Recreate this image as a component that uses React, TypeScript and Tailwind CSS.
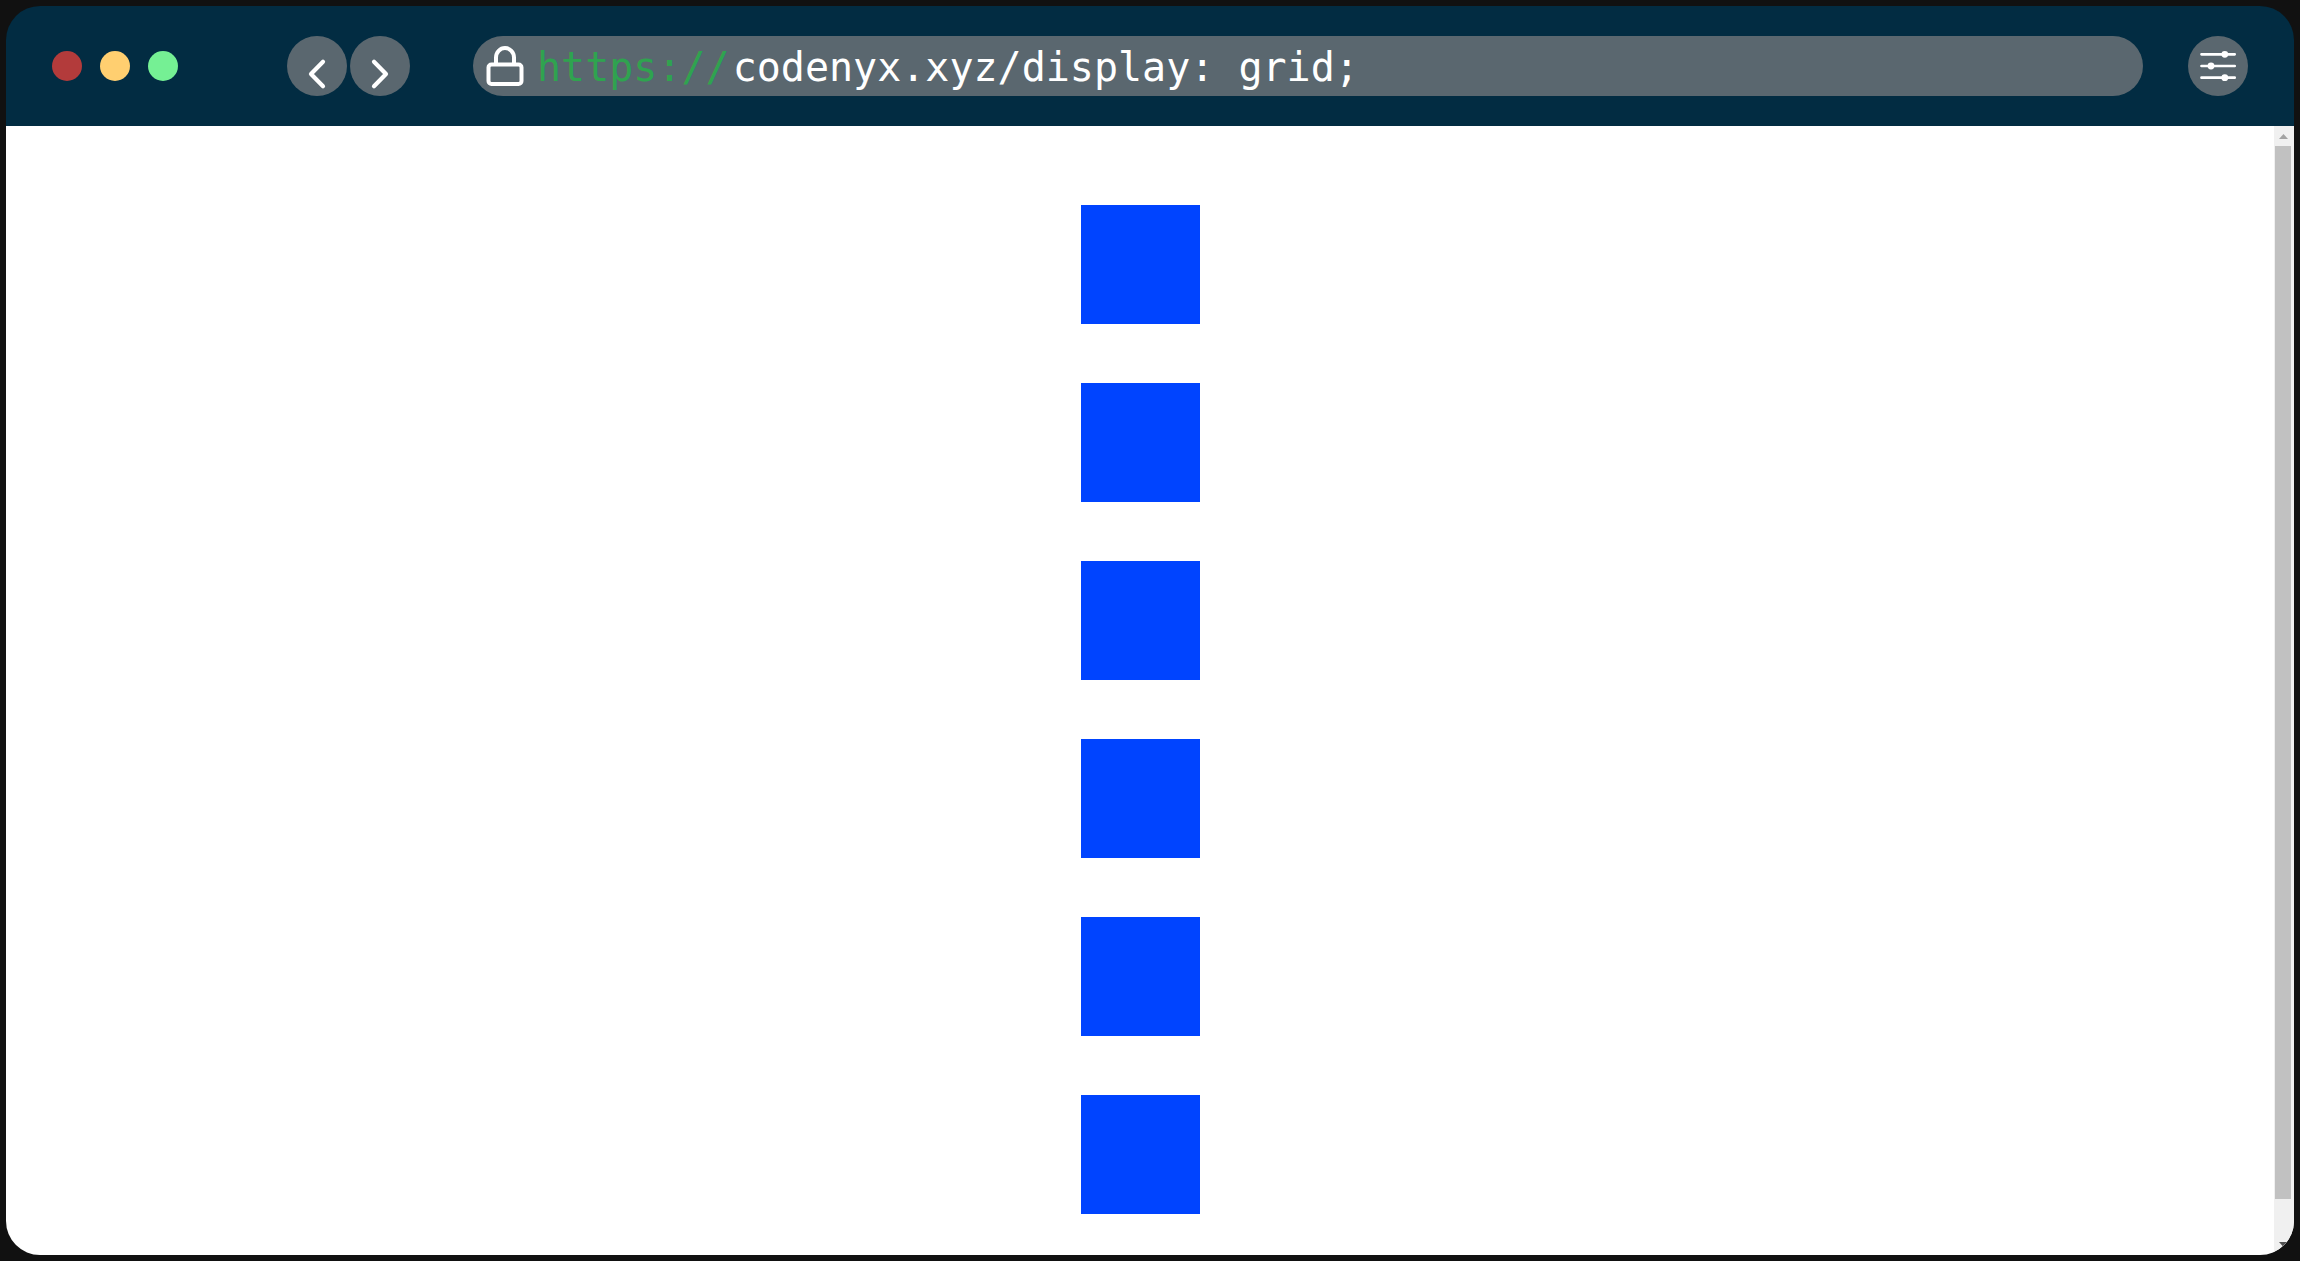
import React, { useState } from "react";

const NavButton = ({ label, points }: { label: string; points: string }) => (
  <button type="button" aria-label={label} className="size-[60px] shrink-0 rounded-full bg-[#5a676f] text-white">
    <svg viewBox="0 0 60 60" className="size-full" fill="none" stroke="currentColor" strokeWidth="4.2" strokeLinecap="round" strokeLinejoin="round">
      <polyline points={points} />
    </svg>
  </button>
);

const LockIcon = () => (
  <svg viewBox="0 0 60 60" className="size-[60px] shrink-0" fill="none" stroke="currentColor" strokeWidth="4" aria-hidden="true">
    <rect x="15.5" y="28.5" width="33" height="19.5" rx="3" />
    <path d="M23 28V21.5a9 9.5 0 0 1 18 0V28" />
  </svg>
);

const SettingsIcon = () => (
  <svg viewBox="0 0 60 60" className="size-full" fill="currentColor" stroke="currentColor" aria-hidden="true">
    <path d="M13.5 18.3H46.7M13.5 30H46.7M13.5 41.7H46.7" strokeWidth="2.7" strokeLinecap="round" />
    <g stroke="none">
      <circle cx="36.8" cy="18.3" r="3.4" />
      <circle cx="23" cy="30" r="3.4" />
      <circle cx="36.8" cy="41.7" r="3.4" />
    </g>
  </svg>
);

function TopBar() {
  const [address, setAddress] = useState("codenyx.xyz/display: grid;");
  return (
    <header className="flex h-[120px] items-center bg-[#022c42] px-[46px]">
      <div className="flex shrink-0 gap-[18px]">
        <button type="button" aria-label="Close" className="size-[30px] rounded-full bg-[#b33b3b]" />
        <button type="button" aria-label="Minimize" className="size-[30px] rounded-full bg-[#ffcf70]" />
        <button type="button" aria-label="Maximize" className="size-[30px] rounded-full bg-[#75f094]" />
      </div>
      <nav className="ml-[109px] flex shrink-0 gap-[3px]">
        <NavButton label="Back" points="36,25.8 24,38 36,50.2" />
        <NavButton label="Forward" points="24,25.8 36,38 24,50.2" />
      </nav>
      <label className="ml-[63px] flex h-[60px] min-w-0 flex-1 items-center rounded-full bg-[#5a676f] pr-8 font-['DejaVu_Sans_Mono',monospace] text-[40px] leading-[60px] text-white">
        <LockIcon />
        <span className="ml-1 pt-[2px] text-[#2fa34f]">https://</span>
        <input
          type="text"
          aria-label="Address"
          spellCheck={false}
          value={address}
          onChange={(e) => setAddress(e.target.value)}
          className="ml-[3px] min-w-0 flex-1 bg-transparent pt-[2px] outline-none"
        />
      </label>
      <button type="button" aria-label="Settings" className="ml-[45px] size-[60px] shrink-0 rounded-full bg-[#5a676f] text-white">
        <SettingsIcon />
      </button>
    </header>
  );
}

const Scrollbar = () => (
  <div aria-hidden="true" className="flex w-5 shrink-0 flex-col items-center bg-[#f0f0f0]">
    <svg viewBox="0 0 20 20" className="size-5 shrink-0">
      <path d="M5 13L9.5 8L14 13Z" fill="#a3a3a3" />
    </svg>
    <div className="mr-[2px] w-4 flex-1 bg-[#c1c1c1]" />
    <div className="flex h-14 w-5 shrink-0 flex-col justify-end">
      <svg viewBox="0 0 20 20" className="size-5">
        <path d="M5 7H14L9.5 12Z" fill="#505050" />
      </svg>
    </div>
  </div>
);

export default function App() {
  return (
    <div className="flex min-h-screen flex-col bg-[#111111] p-[6px]">
      <div className="flex flex-1 flex-col overflow-hidden rounded-[34px]">
        <TopBar />
        <div className="flex flex-1 bg-white">
          <main className="grid flex-1 content-start justify-center gap-[59px] pt-[79px] pb-10">
            {[1, 2, 3, 4, 5, 6].map((n) => (
              <div key={n} className="size-[119px] bg-[#0044ff]" />
            ))}
          </main>
          <Scrollbar />
        </div>
      </div>
    </div>
  );
}
